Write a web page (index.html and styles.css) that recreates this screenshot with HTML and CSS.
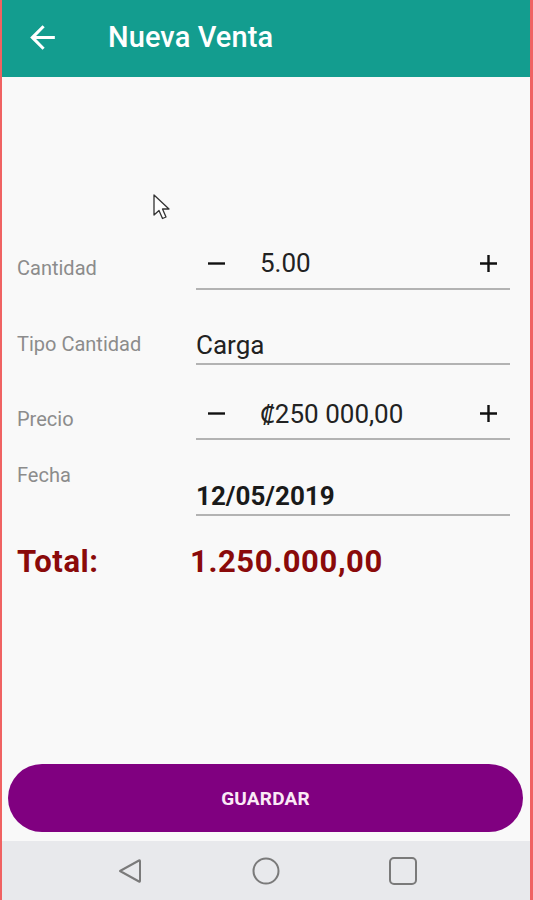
FILE: index.html
```html
<!DOCTYPE html>
<html lang="es">
<head>
<meta charset="utf-8">
<title>Nueva Venta</title>
<link rel="stylesheet" href="styles.css">
</head>
<body>
<div class="screen">
  <header class="appbar">
    <svg class="back" viewBox="0 0 24 24" width="37" height="37"><path d="M20 11H7.83l5.59-5.59L12 4l-8 8 8 8 1.41-1.41L7.83 13H20v-2z" fill="#fff"/></svg>
    <h1 class="title">Nueva Venta</h1>
  </header>
  <main class="content">
    <div class="form">
      <div class="row">
        <div class="label">Cantidad</div>
        <div class="field stepper">
          <svg class="op" width="17" height="17" viewBox="0 0 17 17"><path d="M0 8.5H17" stroke="#111" stroke-width="2.4"/></svg>
          <span class="val">5.00</span>
          <svg class="op" width="17" height="17" viewBox="0 0 17 17"><path d="M0 8.5H17M8.5 0V17" stroke="#111" stroke-width="2.4"/></svg>
        </div>
      </div>
      <div class="row">
        <div class="label lab-tipo">Tipo Cantidad</div>
        <div class="field text">Carga</div>
      </div>
      <div class="row">
        <div class="label lab-tipo">Precio</div>
        <div class="field stepper">
          <svg class="op" width="17" height="17" viewBox="0 0 17 17"><path d="M0 8.5H17" stroke="#111" stroke-width="2.4"/></svg>
          <span class="val">₡250 000,00</span>
          <svg class="op" width="17" height="17" viewBox="0 0 17 17"><path d="M0 8.5H17M8.5 0V17" stroke="#111" stroke-width="2.4"/></svg>
        </div>
      </div>
      <div class="row row-date">
        <div class="label lab-top">Fecha</div>
        <div class="field text date">12/05/2019</div>
      </div>
    </div>
    <div class="total">
      <span class="total-label">Total:</span>
      <span class="total-val">1.250.000,00</span>
    </div>
    <div class="spacer"></div>
    <button class="save">GUARDAR</button>
  </main>
  <nav class="sysnav">
    <svg width="26" height="28" viewBox="0 0 26 28"><path d="M3 14 L22 3.5 Q23 3 23 4.2 V23.8 Q23 25 22 24.5 Z" fill="none" stroke="#7a7a7a" stroke-width="2" stroke-linejoin="round"/></svg>
    <svg width="28" height="28" viewBox="0 0 28 28"><circle cx="14" cy="14" r="12.5" fill="none" stroke="#7a7a7a" stroke-width="2"/></svg>
    <svg width="28" height="28" viewBox="0 0 28 28"><rect x="1" y="1" width="26" height="26" rx="4" fill="none" stroke="#7a7a7a" stroke-width="2"/></svg>
  </nav>
  <svg class="cursor" width="20" height="30" viewBox="0 0 20 30"><path d="M2 2 L2 22 L7 17.5 L10.5 25.5 L14 24 L10.5 16 L17 16 Z" fill="#fff" stroke="#333" stroke-width="1.3" stroke-linejoin="round"/></svg>
</div>
</body>
</html>
```
FILE: styles.css
```css
* { box-sizing: border-box; }
html, body { margin: 0; padding: 0; }
body {
  font-family: Roboto, "Noto Sans", "Liberation Sans", sans-serif;
  background: #fafafa;
}
.screen {
  position: relative;
  width: 533px;
  height: 900px;
  display: flex;
  flex-direction: column;
  border-left: 2px solid #f06262;
  border-right: 3px solid #f06262;
  background: #f9f9f9;
  overflow: hidden;
}
.appbar {
  height: 77px;
  flex: none;
  background: #139d8f;
  display: flex;
  align-items: center;
  padding-left: 22px;
}
.back { display: block; margin-top: -3px; }
.title {
  margin: 0 0 0 47px;
  margin-top: -3px;
  color: #fff;
  font-size: 29px;
  font-weight: 500;
  letter-spacing: 0.1px;
}
.content {
  flex: 1;
  display: flex;
  flex-direction: column;
  padding-top: 138px;
}
.row {
  height: 75px;
  display: flex;
  align-items: flex-end;
}
.row-date { height: 76px; }
.label {
  width: 194px;
  padding-left: 15px;
  padding-bottom: 11px;
  font-size: 20px;
  line-height: 22px;
  color: #8c8c8c;
}
.lab-tipo { padding-bottom: 10px; }
.lab-top { align-self: flex-start; padding-top: 24px; padding-bottom: 0; }
.field {
  width: 314px;
  border-bottom: 2px solid #b3b3b3;
  display: flex;
  align-items: center;
  font-size: 26px;
  color: #222;
}
.stepper { height: 52px; padding: 0 13px 0 12px; }
.text { height: 38px; }
.date { font-weight: 700; color: #1a1a1a; }
.op { display: block; flex: none; }
.val { margin-left: 35px; flex: 1; }
.total {
  margin-top: 27px;
  display: flex;
  align-items: center;
  height: 36px;
  color: #8a0a0a;
  font-weight: 700;
  font-size: 31px;
  letter-spacing: 0.6px;
}
.total-label { width: 188px; padding-left: 15px; }
.spacer { flex: 1; }
.save {
  margin: 0 7px 9px 6px;
  height: 68px;
  border: none;
  border-radius: 34px;
  background: #800080;
  color: #fbe9f6;
  font-family: Roboto, "Noto Sans", "Liberation Sans", sans-serif;
  font-weight: 700;
  font-size: 19px;
  letter-spacing: 0.2px;
}
.sysnav {
  height: 59px;
  flex: none;
  background: #e8e9ec;
  display: flex;
  align-items: center;
  gap: 109px;
  padding-left: 115px;
}
.sysnav svg { display: block; }
.cursor { position: absolute; left: 150px; top: 193px; }
```
